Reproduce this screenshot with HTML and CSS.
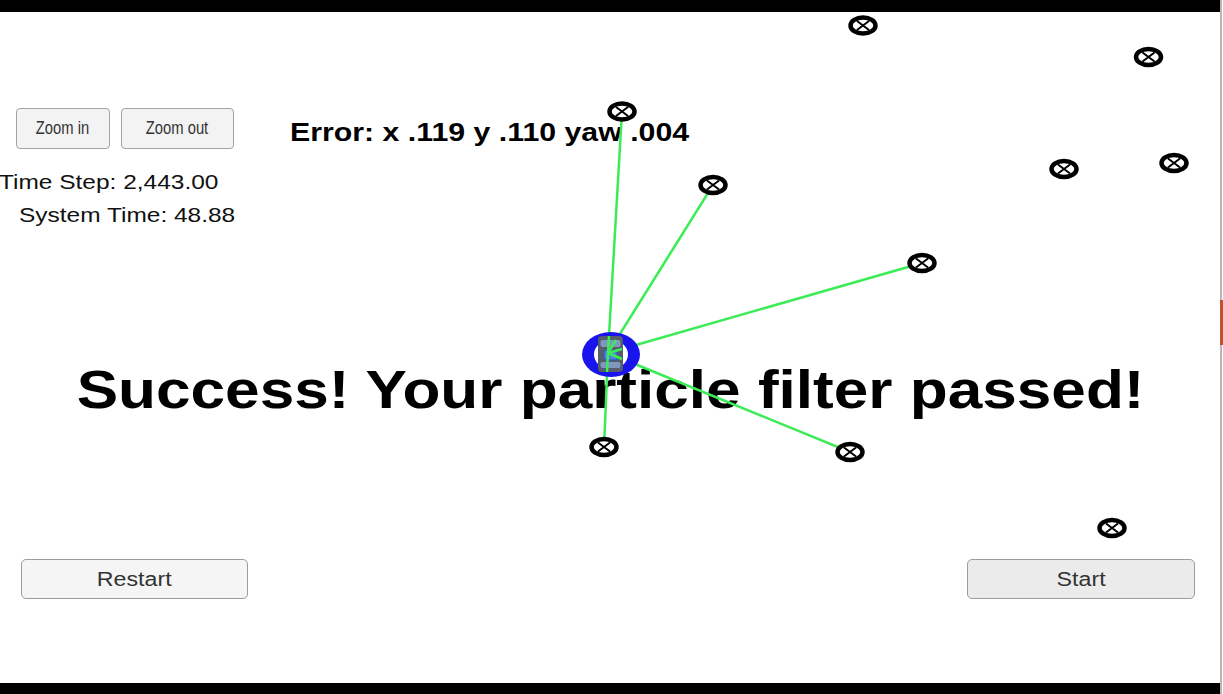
FILE: index.html
```html
<!DOCTYPE html>
<html lang="en">
<head>
<meta charset="utf-8">
<title>Particle Filter Simulator</title>
<link rel="stylesheet" href="styles.css">
</head>
<body>
<div class="screen">
  <div class="main">
    <div class="topbar"></div>
    <div class="stage">
      <div class="controls">
        <div class="toprow">
          <button class="zbtn zin"><span class="nx">Zoom in</span></button>
          <button class="zbtn zout"><span class="nx">Zoom out</span></button>
          <div class="error"><span class="sx">Error: x .119 y .110 yaw .004</span></div>
        </div>
        <div class="stat timestep"><span class="sx">Time Step: 2,443.00</span></div>
        <div class="stat systime"><span class="sx">System Time: 48.88</span></div>
        <div class="success"><span class="sxc wide">Success! Your particle filter passed!</span></div>
        <div class="bottomrow">
          <button class="wbtn restart"><span class="sxc">Restart</span></button>
          <button class="wbtn start"><span class="sxc">Start</span></button>
        </div>
      </div>
      <svg class="canvas" viewBox="0 12 1220 671" width="1220" height="671" aria-hidden="true">
        <g class="obs">
          <line x1="608" y1="353" x2="622" y2="111.5"/>
          <line x1="608" y1="353" x2="713" y2="185"/>
          <line x1="608" y1="353" x2="922" y2="263"/>
          <line x1="608" y1="353" x2="850" y2="452"/>
          <line x1="608" y1="353" x2="604" y2="447"/>
        </g>
        <g class="car">
          <ellipse class="ring" cx="611" cy="354.5" rx="29" ry="22.5"/>
          <ellipse class="hole" cx="611" cy="354.5" rx="17" ry="14.5"/>
          <rect class="body" x="598" y="336" width="25" height="36" rx="4"/>
          <rect class="glass" x="600.5" y="340" width="20" height="7" rx="2"/>
          <rect class="glass" x="600.5" y="362" width="20" height="6" rx="2"/>
          <rect class="emblem" x="604" y="350" width="13" height="10" rx="2"/>
        </g>
        <g class="obs">
          <line x1="608" y1="353" x2="616" y2="340"/>
          <line x1="608" y1="353" x2="622" y2="349"/>
          <line x1="608" y1="353" x2="622" y2="359"/>
          <line x1="608" y1="353" x2="607" y2="372"/>
          <line x1="608" y1="353" x2="609" y2="336"/>
        </g>
        <g class="marks">
          <g transform="translate(863 25.5)"><ellipse rx="12.5" ry="8"/><path d="M-6 -4.5 L6 4.5 M-6 4.5 L6 -4.5"/></g>
          <g transform="translate(1148.5 57)"><ellipse rx="12.5" ry="8"/><path d="M-6 -4.5 L6 4.5 M-6 4.5 L6 -4.5"/></g>
          <g transform="translate(622 111.5)"><ellipse rx="12.5" ry="8"/><path d="M-6 -4.5 L6 4.5 M-6 4.5 L6 -4.5"/></g>
          <g transform="translate(1064 169)"><ellipse rx="12.5" ry="8"/><path d="M-6 -4.5 L6 4.5 M-6 4.5 L6 -4.5"/></g>
          <g transform="translate(1174 163)"><ellipse rx="12.5" ry="8"/><path d="M-6 -4.5 L6 4.5 M-6 4.5 L6 -4.5"/></g>
          <g transform="translate(713 185)"><ellipse rx="12.5" ry="8"/><path d="M-6 -4.5 L6 4.5 M-6 4.5 L6 -4.5"/></g>
          <g transform="translate(922 263)"><ellipse rx="12.5" ry="8"/><path d="M-6 -4.5 L6 4.5 M-6 4.5 L6 -4.5"/></g>
          <g transform="translate(604 447)"><ellipse rx="12.5" ry="8"/><path d="M-6 -4.5 L6 4.5 M-6 4.5 L6 -4.5"/></g>
          <g transform="translate(850 452)"><ellipse rx="12.5" ry="8"/><path d="M-6 -4.5 L6 4.5 M-6 4.5 L6 -4.5"/></g>
          <g transform="translate(1112 528)"><ellipse rx="12.5" ry="8"/><path d="M-6 -4.5 L6 4.5 M-6 4.5 L6 -4.5"/></g>
        </g>
      </svg>
    </div>
    <div class="bottombar"></div>
  </div>
  <div class="edge"><div class="thumb"></div></div>
</div>
</body>
</html>
```

FILE: styles.css
```css
html, body {
  margin: 0;
  padding: 0;
  background: #ffffff;
  overflow: hidden;
}
body {
  font-family: "Liberation Sans", Arial, sans-serif;
  color: #000;
}
.screen {
  display: flex;
  width: 1223px;
  height: 694px;
}
.main {
  width: 1220px;
  display: flex;
  flex-direction: column;
}
.topbar {
  height: 12px;
  background: #000;
  flex: none;
}
.bottombar {
  height: 11px;
  background: #000;
  flex: none;
}
.stage {
  position: relative;
  flex: 1;
  overflow: hidden;
}
.controls {
  height: 100%;
  box-sizing: border-box;
  padding-top: 96px;
  display: flex;
  flex-direction: column;
}
.toprow {
  display: flex;
  align-items: flex-start;
  padding-left: 16px;
}
.zbtn {
  height: 41px;
  margin: 0;
  padding: 0;
  background: #f3f3f3;
  border: 1px solid #a3a3a3;
  border-radius: 4px;
  color: #333;
  font-family: "Liberation Sans", Arial, sans-serif;
  font-size: 18px;
}
.nx {
  display: inline-block;
  transform: scaleX(0.82);
  transform-origin: center center;
  white-space: nowrap;
}
.zin { width: 94px; }
.zout { width: 113px; margin-left: 11px; }
.error {
  margin-left: 56px;
  margin-top: 9px;
  font-size: 26px;
  line-height: 30px;
  font-weight: bold;
  white-space: nowrap;
}
.sx {
  display: inline-block;
  transform: scaleX(1.165);
  transform-origin: left center;
  white-space: nowrap;
}
.sxc {
  display: inline-block;
  transform: scaleX(1.16);
  transform-origin: center center;
  white-space: nowrap;
}
.sxc.wide {
  transform: scaleX(1.172);
}
.stat {
  font-size: 21px;
  line-height: 24px;
  color: #111;
}
.timestep {
  margin-top: 21px;
  margin-left: -1px;
}
.systime {
  margin-top: 9px;
  padding-left: 19px;
}
.success {
  margin-top: 133px;
  font-size: 53px;
  line-height: 60px;
  font-weight: bold;
  text-align: center;
  padding-left: 1px;
}
.bottomrow {
  margin-top: auto;
  margin-bottom: 84px;
  display: flex;
  justify-content: space-between;
  padding: 0 25px 0 21px;
}
.wbtn {
  height: 40px;
  margin: 0;
  padding: 0;
  border: 1px solid #9c9c9c;
  border-radius: 5px;
  color: #333;
  font-family: "Liberation Sans", Arial, sans-serif;
  font-size: 20px;
}
.restart { width: 227px; background: #f5f5f5; }
.start { width: 228px; background: #ebebeb; }
.canvas {
  position: absolute;
  left: 0;
  top: 0;
  pointer-events: none;
}
.obs line {
  stroke: #3cec56;
  stroke-width: 2.5;
}
.ring { fill: #1a14ec; }
.hole { fill: #ffffff; }
.body { fill: #555c6a; }
.glass { fill: #7f97be; }
.emblem { fill: #4f7fe0; stroke: #2b55c8; stroke-width: 1; }
.marks ellipse {
  fill: #ffffff;
  stroke: #000;
  stroke-width: 4.5;
}
.marks path {
  stroke: #000;
  stroke-width: 2;
  fill: none;
}
.edge {
  width: 3px;
  position: relative;
  background: #fff;
}
.edge::before {
  content: "";
  display: block;
  width: 2px;
  height: 100%;
  background: #b8b8b8;
}
.thumb {
  position: absolute;
  left: 0;
  top: 300px;
  width: 3px;
  height: 45px;
  background: #c0532b;
}
```
